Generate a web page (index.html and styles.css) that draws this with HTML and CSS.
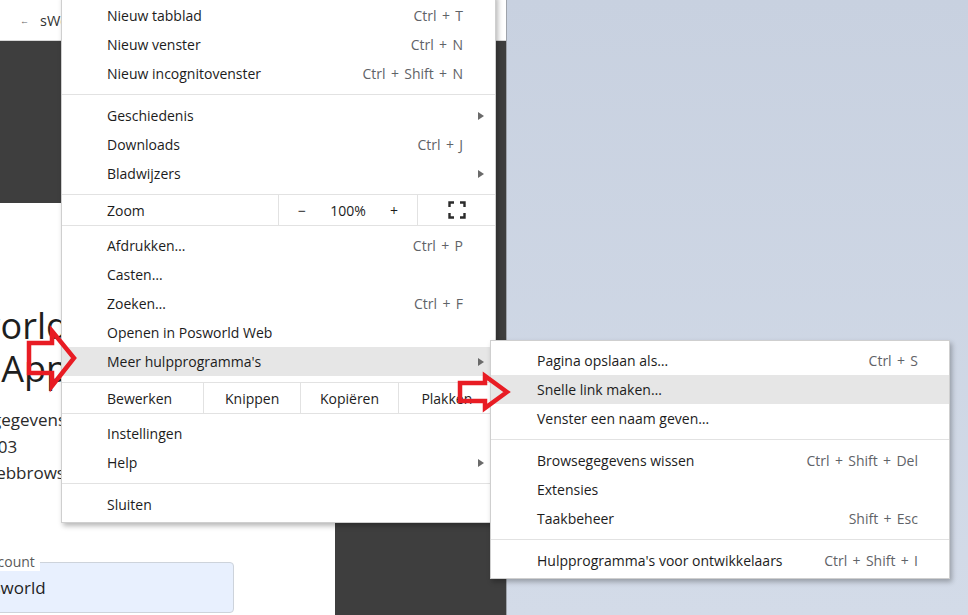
FILE: index.html
```html
<!DOCTYPE html>
<html lang="nl">

<head>
    <meta charset="UTF-8">
    <meta name="viewport" content="width=device-width, initial-scale=1.0">
    <title>Meer hulpprogramma's</title>
    <link rel="stylesheet" href="styles.css">
</head>

<body>
    <div class="desktop">
        <!-- browser window, partly off screen -->
        <div class="window">
            <div class="topbar">
                <span class="tab-icon">&larr;</span>
                <span class="tab-title">sWorld</span>
            </div>
            <div class="page-header"></div>
            <div class="page-body">
                <div class="page-main">
                    <h1 class="hero-title">Posworld<br>Web App</h1>
                    <p class="hero-text">Inloggegevens opgeslagen<br>Build 03<br>Uw webbrowser</p>
                    <div class="field">
                        <span class="field-label">Account</span>
                        <span class="field-value">Posworld</span>
                    </div>
                </div>
                <div class="page-side"></div>
            </div>
        </div>

        <!-- main browser menu -->
        <div class="menu main-menu">
            <div class="item"><span>Nieuw tabblad</span><span class="key">Ctrl + T</span></div>
            <div class="item"><span>Nieuw venster</span><span class="key">Ctrl + N</span></div>
            <div class="item"><span>Nieuw incognitovenster</span><span class="key">Ctrl + Shift + N</span></div>
            <div class="sep"></div>
            <div class="item"><span>Geschiedenis</span><span></span><span class="more"></span></div>
            <div class="item"><span>Downloads</span><span class="key">Ctrl + J</span></div>
            <div class="item"><span>Bladwijzers</span><span></span><span class="more"></span></div>
            <div class="zoom-row">
                <span class="zoom-label">Zoom</span>
                <div class="zoom-controls">
                    <span>&minus;</span>
                    <span>100%</span>
                    <span>+</span>
                </div>
                <div class="zoom-full">
                    <svg width="18" height="18" viewBox="0 0 18 18">
                        <path d="M1.5 6V1.5H6M12 1.5h4.5V6M16.5 12v4.5H12M6 16.5H1.5V12" fill="none" stroke="#2b2b2b" stroke-width="2.4" />
                    </svg>
                </div>
            </div>
            <div class="item"><span>Afdrukken…</span><span class="key">Ctrl + P</span></div>
            <div class="item"><span>Casten…</span></div>
            <div class="item"><span>Zoeken…</span><span class="key">Ctrl + F</span></div>
            <div class="item"><span>Openen in Posworld Web</span></div>
            <div class="item hot"><span>Meer hulpprogramma's</span><span></span><span class="more"></span></div>
            <div class="edit-row">
                <span class="edit-label">Bewerken</span>
                <span class="edit-btn">Knippen</span>
                <span class="edit-btn">Kopiëren</span>
                <span class="edit-btn">Plakken</span>
            </div>
            <div class="item"><span>Instellingen</span></div>
            <div class="item"><span>Help</span><span></span><span class="more"></span></div>
            <div class="sep"></div>
            <div class="item"><span>Sluiten</span></div>
        </div>

        <!-- submenu: Meer hulpprogramma's -->
        <div class="menu sub-menu">
            <div class="item"><span>Pagina opslaan als…</span><span class="key">Ctrl + S</span></div>
            <div class="item hot"><span>Snelle link maken…</span></div>
            <div class="item"><span>Venster een naam geven…</span></div>
            <div class="sep"></div>
            <div class="item"><span>Browsegegevens wissen</span><span class="key">Ctrl + Shift + Del</span></div>
            <div class="item"><span>Extensies</span></div>
            <div class="item"><span>Taakbeheer</span><span class="key">Shift + Esc</span></div>
            <div class="sep"></div>
            <div class="item"><span>Hulpprogramma's voor ontwikkelaars</span><span class="key">Ctrl + Shift + I</span></div>
        </div>

        <!-- red annotation arrows drawn over the screenshot -->
        <svg class="markers" width="968" height="615" viewBox="0 0 968 615">
            <polygon points="29,343 52,343 52,331 74,358 52,386 52,373 29,373" />
            <polygon points="460,383 485,383 485,376 507,392 485,408 485,401 460,401" />
        </svg>
    </div>
</body>

</html>
```

FILE: styles.css
```css
/* Browser menu screenshot with two red annotation arrows */

html,
body {
    margin: 0;
    padding: 0;
    height: 100%;
    overflow: hidden;
}

body {
    font-family: "Open Sans", "Noto Sans", sans-serif;
}

.desktop {
    position: relative;
    width: 968px;
    height: 615px;
    background: linear-gradient(#c8d1e0, #d3dbe8);
    overflow: hidden;
}

/* ---------- page behind the menu ---------- */

.window {
    width: 506px;
    height: 615px;
    border-right: 1px solid #9ea3ab;
    background-color: #3e3e3e;
    display: flex;
    flex-direction: column;
    overflow: hidden;
}

.topbar {
    height: 40px;
    flex-shrink: 0;
    border-bottom: 1px solid #d6d6d6;
    background-color: #ffffff;
    display: flex;
    align-items: center;
    gap: 11px;
    padding-left: 20px;
    font-size: 14.5px;
    color: #333333;
}

.tab-icon {
    font-size: 9px;
    color: #666666;
}

.page-header {
    height: 162px;
    flex-shrink: 0;
}

.page-body {
    flex: 1;
    display: flex;
}

.page-main {
    width: 335px;
    background-color: #ffffff;
    padding-top: 101px;
    box-sizing: border-box;
    color: #1e1e1e;
}

.page-side {
    flex: 1;
}

.hero-title {
    margin: 0 0 0 -182px;
    width: 250px;
    text-align: right;
    font-size: 36px;
    line-height: 43px;
    font-weight: 400;
}

.hero-text {
    margin: 17px 0 0 -47px;
    font-size: 17px;
    line-height: 26.5px;
    color: #2a2a2a;
}

.field {
    position: relative;
    margin: 75px 0 0 -42px;
    width: 276px;
    height: 51px;
    box-sizing: border-box;
    border: 1px solid #cdd3db;
    border-radius: 4px;
    background-color: #e8f0fe;
    display: flex;
    align-items: center;
    padding-left: 13px;
    font-size: 17px;
}

.field-label {
    position: absolute;
    top: -10px;
    left: 23px;
    padding-right: 5px;
    background-color: #ffffff;
    font-size: 14px;
    line-height: 18px;
    color: #5a5a5a;
}

/* ---------- menus ---------- */

.menu {
    position: absolute;
    background-color: #ffffff;
    border: 1px solid #cfcfcf;
    box-shadow: 2px 3px 5px rgba(0, 0, 0, 0.28);
    box-sizing: border-box;
    font-size: 14px;
    color: #1c1c1c;
}

.main-menu {
    left: 61px;
    top: -6px;
    width: 435px;
    padding: 6px 0 3px;
}

.sub-menu {
    left: 490px;
    top: 340px;
    width: 460px;
    padding: 5px 0 3px;
}

.item {
    height: 29px;
    display: grid;
    grid-template-columns: 1fr auto 32px;
    align-items: center;
    padding-left: 45px;
    white-space: nowrap;
}

.sub-menu .item {
    grid-template-columns: 1fr auto;
    padding-left: 46px;
    padding-right: 31px;
}

.item.hot {
    background-color: #e6e6e6;
}

.key {
    color: #5f6368;
    word-spacing: 1.7px;
}

.more {
    justify-self: center;
    margin-left: 4px;
    width: 0;
    height: 0;
    border-left: 6px solid #6a6a6a;
    border-top: 4.5px solid transparent;
    border-bottom: 4.5px solid transparent;
}

.sep {
    height: 1px;
    background-color: #e2e2e2;
    margin: 6px 0;
}

/* Zoom row */
.zoom-row {
    display: grid;
    grid-template-columns: 216px 140px 1fr;
    height: 30px;
    margin: 6px 0 5px;
    border-top: 1px solid #e2e2e2;
    border-bottom: 1px solid #e2e2e2;
}

.zoom-label {
    display: flex;
    align-items: center;
    padding-left: 45px;
}

.zoom-controls {
    display: grid;
    grid-template-columns: repeat(3, 1fr);
    align-items: center;
    text-align: center;
    border-left: 1px solid #e2e2e2;
    border-right: 1px solid #e2e2e2;
}

.zoom-full {
    display: flex;
    align-items: center;
    justify-content: center;
}

/* Bewerken row */
.edit-row {
    display: grid;
    grid-template-columns: 141px repeat(3, 1fr);
    height: 30px;
    margin: 6px 0 5px;
    border-top: 1px solid #e2e2e2;
    border-bottom: 1px solid #e2e2e2;
}

.edit-label {
    display: flex;
    align-items: center;
    padding-left: 45px;
}

.edit-btn {
    display: flex;
    align-items: center;
    justify-content: center;
    border-left: 1px solid #e2e2e2;
}

/* ---------- annotation arrows ---------- */

.markers {
    position: absolute;
    left: 0;
    top: 0;
    pointer-events: none;
}

.markers polygon {
    fill: none;
    stroke: #e81c24;
    stroke-width: 4.5;
    stroke-linejoin: miter;
}
```
